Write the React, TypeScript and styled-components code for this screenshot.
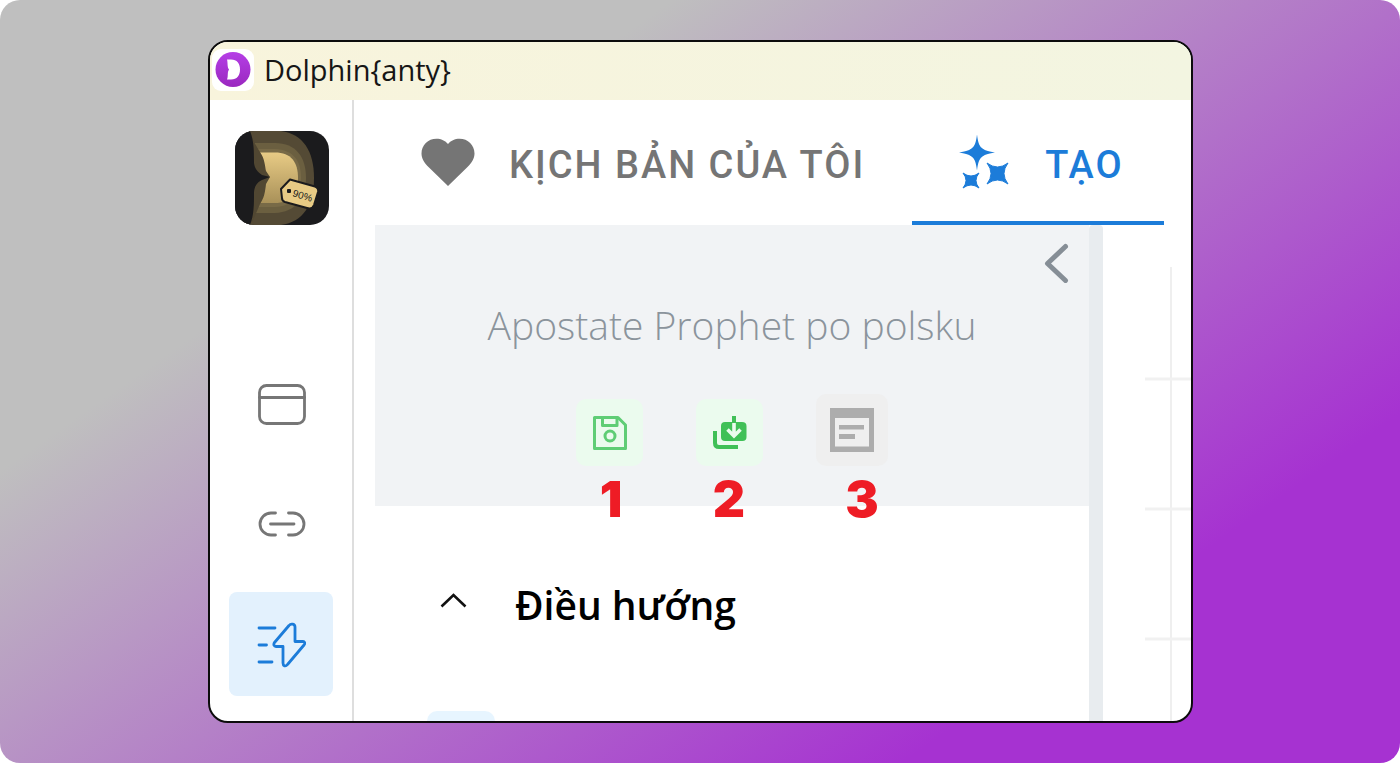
import React from "react";
import styled, { createGlobalStyle } from "styled-components";

const GlobalStyle = createGlobalStyle`
  *, *::before, *::after { box-sizing: border-box; }
  body { margin: 0; background: #fff; font-family: "Open Sans", "Noto Sans", sans-serif; }
  button { font: inherit; border: 0; padding: 0; background: none; cursor: pointer; }
  svg { display: block; }
`;

const Stage = styled.div`
  display: flex;
  min-height: 100vh;
  padding: 40px 207px 40px 208px;
  border-radius: 20px;
  background: linear-gradient(145deg, #bfbfbf 27%, #a632d1 80%);
`;

const Window = styled.div`
  flex: 1;
  min-width: 0;
  display: flex;
  flex-direction: column;
  overflow: hidden;
  border: 2px solid #0c0c0c;
  border-radius: 20px;
  background: #fff;
`;

const TitleBar = styled.header`
  display: flex;
  align-items: center;
  gap: 10px;
  height: 58px;
  padding: 0 2px 2px;
  background: linear-gradient(90deg, #f8f4dc, #f3f5e1);
`;

const Title = styled.h1`
  margin: 0;
  font-size: 29px;
  line-height: 40px;
  font-weight: 400;
  color: #161616;
`;

const Workspace = styled.div`
  flex: 1;
  display: flex;
`;

const Sidebar = styled.nav`
  width: 144px;
  padding: 31px 0 0 19px;
  border-right: 2px solid #dedede;
`;

const AvatarButton = styled.button`
  display: block;
  width: 94px;
  height: 94px;
  margin: 0 6px 127px;
`;

const NavGroup = styled.div`
  display: flex;
  flex-direction: column;
  gap: 16px;
`;

const NavButton = styled.button<{ $active?: boolean }>`
  display: grid;
  place-items: center;
  width: 104px;
  height: 104px;
  border-radius: 8px;
  color: ${(p) => (p.$active ? "#1c7cd9" : "#767676")};
  background: ${(p) => (p.$active ? "#e3f1fd" : "transparent")};
`;

const Main = styled.main`
  flex: 1;
  min-width: 0;
  display: flex;
  flex-direction: column;
`;

const Tabs = styled.div`
  display: flex;
  height: 125px;
  padding-left: 21px;
`;

const Tab = styled.button<{ $active?: boolean }>`
  display: flex;
  align-items: center;
  gap: 34px;
  padding: ${(p) => (p.$active ? "8px 40px 0 47px" : "8px 47px 0 46px")};
  border-bottom: 4px solid ${(p) => (p.$active ? "#1c7cd9" : "transparent")};
  color: ${(p) => (p.$active ? "#1c7cd9" : "#757575")};
  font: 500 38px/48px Roboto, sans-serif;
  letter-spacing: 2px;
  white-space: nowrap;

  svg { margin-bottom: 6px; }
`;

const Body = styled.div`
  flex: 1;
  display: flex;
  padding-left: 21px;
`;

const Library = styled.section`
  flex: 1;
  min-width: 0;
  display: flex;
  flex-direction: column;
`;

const ScriptPanel = styled.div`
  position: relative;
  display: flex;
  flex-direction: column;
  height: 281px;
  padding-top: 18px;
  background: #f1f3f5;
`;

const CollapseButton = styled.button`
  align-self: flex-end;
  margin-right: 20px;
  height: 40px;
`;

const ScriptName = styled.h2`
  margin: 15px 0 42px;
  text-align: center;
  font-size: 39px;
  line-height: 54px;
  font-weight: 300;
  color: #8b949c;
`;

const Actions = styled.div`
  display: flex;
  justify-content: center;
  align-items: flex-end;
  gap: 53px;
`;

const Action = styled.button<{ $muted?: boolean }>`
  display: grid;
  place-items: center;
  width: ${(p) => (p.$muted ? "72px" : "67px")};
  height: ${(p) => (p.$muted ? "72px" : "67px")};
  border-radius: 10px;
  background: ${(p) => (p.$muted ? "#efefef" : "#ebfbee")};
`;

const Marker = styled.span<{ $x: number }>`
  position: absolute;
  top: 249px;
  left: calc(50% + ${(p) => p.$x}px);
  transform: translateX(-50%);
  font: 900 50px/50px Inter, sans-serif;
  color: #ee1c25;
`;

const GroupToggle = styled.button`
  display: flex;
  align-items: center;
  gap: 48px;
  margin: 69px 0 0 65px;
  font-size: 39px;
  line-height: 60px;
  font-weight: 600;
  color: #000;
  white-space: nowrap;
`;

const ChevronBox = styled.span`
  height: 24px;
`;

const BlockTile = styled.div`
  width: 68px;
  height: 10px;
  margin: auto 0 0 52px;
  border-radius: 10px 10px 0 0;
  background: #e7f5ff;
`;

const ScrollTrack = styled.div`
  width: 14px;
  border-radius: 4px 4px 0 0;
  background: #e8ecef;
`;

const Canvas = styled.div`
  width: 88px;
  padding: 42px 0 0 42px;
  display: flex;
`;

const CanvasGrid = styled.svg`
  width: 100%;
  height: 100%;
`;

function AppLogo() {
  return (
    <svg width="42" height="42" viewBox="0 0 42 42" aria-hidden="true">
      <defs>
        <linearGradient id="logo" x1="0" y1="0" x2="0" y2="1">
          <stop offset="0" stopColor="#b53ee6" />
          <stop offset="1" stopColor="#9a28bf" />
        </linearGradient>
      </defs>
      <rect width="42" height="42" rx="9" fill="#fff" />
      <circle cx="21" cy="20.500" r="17.500" fill="url(#logo)" />
      <path d="M15 10.500H19C25 10.500 28 14.500 28 20.500S25 30.500 19 30.500H15C16.500 27 15 23.500 17 20.500C15 18 16 14 15 10.500Z" fill="#fff" />
    </svg>
  );
}

function Avatar() {
  return (
    <svg width="94" height="94" viewBox="0 0 94 94" aria-hidden="true">
      <defs>
        <clipPath id="avatar-clip"><rect width="94" height="94" rx="19" /></clipPath>
        <linearGradient id="gold" x1="0" y1="0" x2="0" y2="1">
          <stop offset="0" stopColor="#e8cb85" />
          <stop offset="1" stopColor="#a99159" />
        </linearGradient>
      </defs>
      <g clipPath="url(#avatar-clip)">
        <rect width="94" height="94" fill="#1b1b1d" />
        <path d="M14 0H46C68 3 79 20 79 47S68 91 46 94H14Z" fill="#544a35" />
        <path d="M18 12H40C61 12 71 26 71 47S60 81 40 82H16Z" fill="#6b5f40" />
        <path d="M22 18H40C58 19 66 29 66 47S58 75 40 76H22Z" fill="#786a47" />
        <path d="M25 21.500H40C56 21.500 63 31 63 47S55 72 40 72H25Z" fill="url(#gold)" />
        <path d="M15 0C17 8 20 13 25 21C30 28 30 36 31 40L35 46L31 53C30 62 29 67 25 73L16 94H8V0Z" fill="#514732" />
        <path d="M0 0H15C19 10 19 20 19 32C20 40 25 42 27 44L35 46L27 49C22 51 19 56 19 62C19 74 19 84 15 94H0Z" fill="#1b1b1d" />
        <path d="M46 58L55 48.500L80 55.500Q84 57 83 61L79 74Q77 79 72 77L50 71Q47 70 47 67Z" fill="#e8cb85" stroke="#1b1b1d" strokeWidth="2" strokeLinejoin="round" />
        <rect x="52" y="58" width="4" height="4" rx="1" fill="#1b1b1d" />
        <text x="57" y="65" transform="rotate(17 57 65)" fontFamily="Liberation Sans, sans-serif" fontSize="10" fontWeight="400" fill="#1b1b1d">90%</text>
      </g>
    </svg>
  );
}

const stroke = {
  fill: "none",
  stroke: "currentColor",
  strokeWidth: 2.8,
  strokeLinecap: "round",
  strokeLinejoin: "round",
} as const;

function BrowserIcon() {
  return (
    <svg width="50" height="42" viewBox="0 0 50 42" {...stroke}>
      <rect x="3.500" y="2.500" width="45" height="38" rx="7" />
      <path d="M3.500 14.500H48.500" />
    </svg>
  );
}

function LinkIcon() {
  return (
    <svg width="50" height="28" viewBox="0 0 50 28" {...stroke}>
      <path d="M19.500 3H15A11 11 0 0 0 15 25H19.500M32.500 3H37A11 11 0 0 1 37 25H32.500M14.500 14H38" />
    </svg>
  );
}

function AutomationIcon() {
  return (
    <svg width="50" height="48" viewBox="0 0 50 48" {...stroke}>
      <path d="M3 8H19M3 25H10.500M3 42H16" />
      <path d="M33 5.500L18.500 22.500C17.200 24.500 18 26.500 20 26.500H27V43C27 46 29.500 47 31.500 44.500L48 25C49.500 23 48.500 21.500 47 21.500H39V7C39 4 35 3 33 5.500Z" />
    </svg>
  );
}

function HeartIcon() {
  return (
    <svg width="54" height="48" viewBox="0 0 54 48" fill="currentColor" aria-hidden="true">
      <path d="M27 48L8 29.500C3 24.500 .5 20.500 .5 15.500C.5 7 7 .7 15.500 .7C20 .7 24.500 2.700 27 6C29.500 2.700 34 .7 38.500 .7C47 .7 53.500 7 53.500 15.500C53.500 20.500 51 24.500 46 29.500Z" />
    </svg>
  );
}

function SparklesIcon() {
  return (
    <svg width="52" height="56" viewBox="0 0 52 56" fill="currentColor" aria-hidden="true">
      <path d="M18 0.500C19 8 20 12 23 14C25 16 28 17 36 18.500C28 20 25 21 23 23C20 25 19 29 18 36.500C17 29 16 25 13 23C11 21 8 20 0 18.500C8 17 11 16 13 14C16 12 17 8 18 .5Z" />
      <path d="M28 29Q38.500 37 49 29Q41 39.500 49 50Q38.500 42 28 50Q36 39.500 28 29Z" stroke="currentColor" strokeWidth="1" />
      <path d="M4 39Q12 45 20 39Q14 46.500 20 54Q12 48 4 54Q10 46.500 4 39Z" stroke="currentColor" strokeWidth="1" />
    </svg>
  );
}

function SaveIcon() {
  return (
    <svg width="36" height="36" viewBox="0 0 36 36" fill="none" stroke="#5fcd75" strokeWidth="3" strokeLinejoin="round">
      <path d="M2.500 2.500H26L33.500 10V33.500H2.500Z" />
      <path d="M10.500 3V10.500H25V3" />
      <circle cx="18" cy="21" r="5" />
    </svg>
  );
}

function ImportIcon() {
  return (
    <svg width="36" height="36" viewBox="0 0 36 36" fill="none">
      <path d="M13 7H30Q34.500 7 34.500 11V22Q34.500 26 30.500 26H13Q9 26 9 22V11Q9 7 13 7Z" fill="#40c057" />
      <path d="M22 7V20M15.500 14.500L22 21L28.500 14.500" stroke="#ebfbee" strokeWidth="3.600" />
      <path d="M22 1V8" stroke="#40c057" strokeWidth="4" />
      <path d="M3 16V28Q3 32 7 32H26" stroke="#40c057" strokeWidth="4" />
    </svg>
  );
}

function LogIcon() {
  return (
    <svg width="44" height="44" viewBox="0 0 44 44" fill="#adadad">
      <path fillRule="evenodd" d="M0 0H44V44H0ZM5 10V38.500H39V10Z" />
      <path d="M9 17H34V21.500H9ZM9 26H25V31H9Z" />
    </svg>
  );
}

export default function App() {
  return (
    <>
      <GlobalStyle />
      <Stage>
        <Window>
          <TitleBar>
            <AppLogo />
            <Title>Dolphin{"{anty}"}</Title>
          </TitleBar>
          <Workspace>
            <Sidebar>
              <AvatarButton aria-label="Account"><Avatar /></AvatarButton>
              <NavGroup>
                <NavButton aria-label="Browsers"><BrowserIcon /></NavButton>
                <NavButton aria-label="Proxies"><LinkIcon /></NavButton>
                <NavButton $active aria-label="Automation"><AutomationIcon /></NavButton>
              </NavGroup>
            </Sidebar>
            <Main>
              <Tabs role="tablist">
                <Tab role="tab" aria-selected="false"><HeartIcon />KỊCH BẢN CỦA TÔI</Tab>
                <Tab $active role="tab" aria-selected="true"><SparklesIcon />TẠO</Tab>
              </Tabs>
              <Body>
                <Library>
                  <ScriptPanel>
                    <CollapseButton aria-label="Collapse">
                      <svg width="26" height="40" viewBox="0 0 26 40" fill="none" stroke="#868e96" strokeWidth="5" strokeLinecap="round" strokeLinejoin="round">
                        <path d="M22.500 3.500L4.500 20.500L22.500 37.500" />
                      </svg>
                    </CollapseButton>
                    <ScriptName>Apostate Prophet po polsku</ScriptName>
                    <Actions>
                      <Action aria-label="Save"><SaveIcon /></Action>
                      <Action aria-label="Import"><ImportIcon /></Action>
                      <Action $muted aria-label="Log"><LogIcon /></Action>
                    </Actions>
                    <Marker $x={-121}>1</Marker>
                    <Marker $x={-3}>2</Marker>
                    <Marker $x={130}>3</Marker>
                  </ScriptPanel>
                  <GroupToggle aria-expanded="true">
                    <ChevronBox>
                      <svg width="27" height="15" viewBox="0 0 27 15" fill="none" stroke="#111" strokeWidth="2.600">
                        <path d="M1.500 13.500L13.500 2L25.500 13.500" />
                      </svg>
                    </ChevronBox>
                    Điều hướng
                  </GroupToggle>
                  <BlockTile />
                </Library>
                <ScrollTrack />
                <Canvas>
                  <CanvasGrid aria-hidden="true">
                    <path d="M26 0V460" stroke="#efefef" strokeWidth="2" />
                    <path d="M0 112H50M0 242H50M0 372H50" stroke="#f1f1f1" strokeWidth="3" />
                  </CanvasGrid>
                </Canvas>
              </Body>
            </Main>
          </Workspace>
        </Window>
      </Stage>
    </>
  );
}
